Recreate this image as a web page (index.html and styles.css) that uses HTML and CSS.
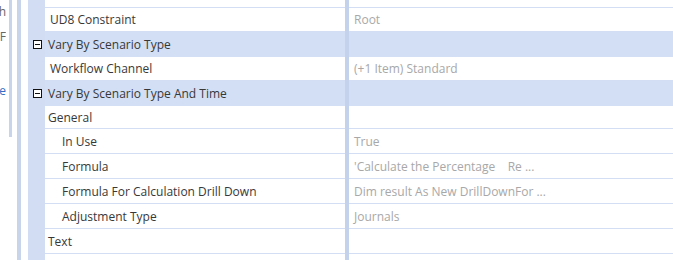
FILE: index.html
```html
<!DOCTYPE html>
<html lang="en">
<head>
  <meta charset="UTF-8">
  <title>Property Grid</title>
  <link rel="stylesheet" href="styles.css">
</head>
<body>

  <div class="side">
    <div class="cut cut-h">Each</div>
    <div class="cut cut-f">F</div>
    <div class="cut cut-e link">Type</div>
  </div>
  <div class="rail rail-short"></div>
  <div class="rail rail-long"></div>

  <div class="grid">
    <div class="row top">
      <div class="gutter"></div><div class="name"></div><div class="split"></div><div class="value"></div>
    </div>
    <div class="row h24">
      <div class="gutter"></div><div class="name lvl1">UD8 Constraint</div><div class="split"></div><div class="value">Root</div>
    </div>
    <div class="row group">
      <div class="gutter"><span class="toggle"></span></div><div class="name">Vary By Scenario Type</div><div class="split"></div><div class="value"></div>
    </div>
    <div class="row h24">
      <div class="gutter"></div><div class="name lvl1">Workflow Channel</div><div class="split"></div><div class="value">(+1 Item) Standard</div>
    </div>
    <div class="row group">
      <div class="gutter"><span class="toggle"></span></div><div class="name">Vary By Scenario Type And Time</div><div class="split"></div><div class="value"></div>
    </div>
    <div class="row h23">
      <div class="gutter"></div><div class="name">General</div><div class="split"></div><div class="value"></div>
    </div>
    <div class="row">
      <div class="gutter"></div><div class="name lvl2">In Use</div><div class="split"></div><div class="value">True</div>
    </div>
    <div class="row">
      <div class="gutter"></div><div class="name lvl2">Formula</div><div class="split"></div><div class="value">'Calculate the Percentage&nbsp;&nbsp;&nbsp; Re ...</div>
    </div>
    <div class="row">
      <div class="gutter"></div><div class="name lvl2">Formula For Calculation Drill Down</div><div class="split"></div><div class="value">Dim result As New DrillDownFor ...</div>
    </div>
    <div class="row">
      <div class="gutter"></div><div class="name lvl2">Adjustment Type</div><div class="split"></div><div class="value">Journals</div>
    </div>
    <div class="row">
      <div class="gutter"></div><div class="name">Text</div><div class="split"></div><div class="value"></div>
    </div>
    <div class="row tail">
      <div class="gutter"></div><div class="name"></div><div class="split"></div><div class="value"></div>
    </div>
  </div>

</body>
</html>
```

FILE: styles.css
```css
body {
  margin: 0;
  height: 260px;
  overflow: hidden;
  display: flex;
  font-family: 'Open Sans', sans-serif;
  font-size: 12px;
  color: #383838;
  background: #fff;
}

.side {
  width: 9px;
  flex-shrink: 0;
}

.cut {
  display: flex;
  justify-content: flex-end;
  width: 6px;
  overflow: hidden;
  white-space: nowrap;
  color: #666;
  font-size: 12px;
  line-height: 14px;
}

.cut-h { margin-top: 5px; }
.cut-f { margin-top: 11px; }
.cut-e { margin-top: 40px; }

.link { color: #2f6fc6; }

.rail {
  width: 3px;
  background: #c7d4ea;
  flex-shrink: 0;
}

.rail-short {
  height: 137px;
  margin-right: 5px;
}

.rail-long {
  width: 4px;
  margin-right: 7px;
}

.grid {
  flex: 1;
  display: flex;
  flex-direction: column;
  overflow: hidden;
}

.row {
  display: grid;
  grid-template-columns: 17px 300px 4px 1fr;
  height: 25px;
  flex-shrink: 0;
}

.row.top { height: 8px; }
.row.h24 { height: 24px; }
.row.h23 { height: 23px; }
.row.tail { height: 6px; }

.gutter {
  background: #d2ddf4;
  display: flex;
  align-items: center;
  justify-content: center;
}

.name, .value {
  display: flex;
  align-items: center;
  white-space: nowrap;
  overflow: hidden;
  border-bottom: 1px solid #d3def4;
  box-sizing: border-box;
}

.tail .name, .tail .value { border-bottom: none; }

.name {
  padding-left: 3px;
}

.name.lvl1 { padding-left: 5px; }
.name.lvl2 { padding-left: 17px; }

.value {
  padding-left: 5px;
  color: #a8a8a8;
}

.split {
  background: #c4d2eb;
}

.group .name, .group .value {
  background: #d3dff5;
  border-bottom: none;
}

.toggle {
  width: 7px;
  height: 7px;
  border: 1px solid #111;
  background: #fff;
  position: relative;
  margin-left: 1px;
}

.toggle::after {
  content: '';
  position: absolute;
  left: 1px;
  right: 1px;
  top: 3px;
  height: 1px;
  background: #111;
}
```
